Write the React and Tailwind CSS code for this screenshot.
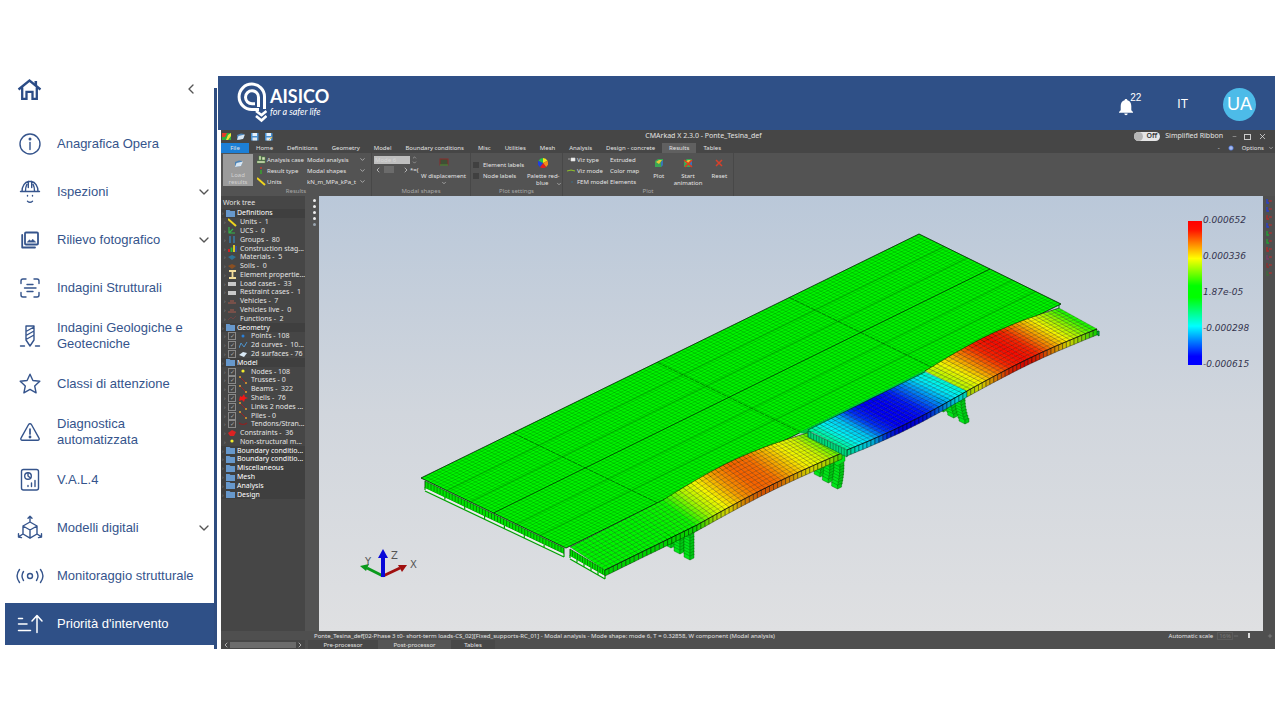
import { Fragment } from 'react';
import { ChevronDown, ChevronLeft, ChevronRight, Minus, Plus, X } from 'lucide-react';

const Svg = ({ children, size = 30, width = 1.4 }) => (
  <svg
    width={size}
    height={size}
    viewBox="0 0 30 30"
    fill="none"
    stroke="currentColor"
    strokeWidth={width}
    strokeLinecap="round"
    strokeLinejoin="round"
    aria-hidden="true"
    className="shrink-0"
  >
    {children}
  </svg>
);

const icons = {
  info: (
    <Svg>
      <circle cx="15" cy="15" r="10" />
      <path d="M15 13.500v7" />
      <circle cx="15" cy="10" r="0.8" fill="currentColor" />
    </Svg>
  ),
  helmet: (
    <Svg>
      <path d="M5.500 14.500h19M7 14.500c0-5.500 3-9.500 6.500-10h3c3.500.5 6.500 4.500 6.500 10M10.500 14c0-2.500.3-4.500 1.300-6.500M19.500 14c0-2.500-.3-4.500-1.300-6.500M13.300 10.500v-6M16.700 10.500v-6" />
      <path d="M12.500 18.500v.6M17.500 18.500v.6M12.500 24.200c1.500 1.300 3.500 1.300 5 0" />
    </Svg>
  ),
  photos: (
    <Svg width={1.8}>
      <rect x="10" y="7.500" width="13" height="12" rx="1" />
      <path d="M7.200 10v12.500H20" />
      <path d="M12.500 17l2-2.300 1.500 1.500 1.700-2 2.800 2.800z" fill="currentColor" strokeWidth="0.600" />
    </Svg>
  ),
  scan: (
    <Svg>
      <path d="M6 10.500V8a2 2 0 0 1 2-2h3M19 6h3a2 2 0 0 1 2 2v2.500M24 19.500V22a2 2 0 0 1-2 2h-3M11 24H8a2 2 0 0 1-2-2v-2.500" />
      <path d="M12 11.500h6M9.500 15h11.500M12 18.500h6" />
    </Svg>
  ),
  drill: (
    <Svg>
      <path d="M11 5h8M11 5v14l4 6 4-6V5M11 10.500L19 6M11 14.500l8-4.500M11 18.500l8-4.500M5.500 25h4M20.500 25h4" />
    </Svg>
  ),
  star: (
    <Svg>
      <path d="M15 5.200l2.900 6.300 6.900.8-5.100 4.700 1.400 6.800-6.100-3.400-6.100 3.400 1.400-6.800-5.100-4.700 6.900-.8z" />
    </Svg>
  ),
  warning: (
    <Svg>
      <path d="M13.600 7.500L6 21.200c-.6 1 .1 2.100 1.200 2.100h15.600c1.100 0 1.800-1.100 1.200-2.100L16.400 7.500c-.6-1-2.200-1-2.800 0z" />
      <path d="M15 12v5" strokeWidth="1.700" />
      <circle cx="15" cy="20" r="0.7" fill="currentColor" />
    </Svg>
  ),
  report: (
    <Svg>
      <rect x="6.500" y="4.500" width="17" height="20.500" rx="2" />
      <circle cx="13" cy="11" r="3.300" />
      <path d="M13 7.700V11l2.500 2M13 21.500v-1M16.500 21.500v-3.500M20 21.500V15.500" />
    </Svg>
  ),
  cube: (
    <Svg>
      <path d="M15 9l7 4v8l-7 4.200L8 21v-8zM8 13l7 4 7-4M15 17v8M15 9V3.500M13 5.200l2-2 2 2M8 21l-4.500 2.800M3.500 20.800v3.200l3 .6M22 21l4.500 2.800M26.500 20.800v3.200l-3 .6" />
    </Svg>
  ),
  signal: (
    <Svg>
      <circle cx="15" cy="15" r="2.500" />
      <path d="M8.500 10.500c-1.800 2.700-1.800 6.300 0 9M21.500 10.500c1.800 2.700 1.800 6.300 0 9M4.500 8.500c-3 4-3 9 0 13M25.500 8.500c3 4 3 9 0 13" />
    </Svg>
  ),
  priority: (
    <Svg width={1.5}>
      <path d="M3.500 9.500h4M3.500 15h8.500M3.500 21.500h12M22 23.500V7M17 12l5-5.500 5 5.500" />
    </Svg>
  ),
};

const menu = [
  { label: 'Anagrafica Opera', icon: 'info' },
  { label: 'Ispezioni', icon: 'helmet', open: true },
  { label: 'Rilievo fotografico', icon: 'photos', open: true },
  { label: 'Indagini Strutturali', icon: 'scan' },
  { label: 'Indagini Geologiche e Geotecniche', icon: 'drill' },
  { label: 'Classi di attenzione', icon: 'star' },
  { label: 'Diagnostica automatizzata', icon: 'warning' },
  { label: 'V.A.L.4', icon: 'report' },
  { label: 'Modelli digitali', icon: 'cube', open: true },
  { label: 'Monitoraggio strutturale', icon: 'signal' },
  { label: "Priorità d'intervento", icon: 'priority', active: true },
];

const Sidebar = () => (
  <aside className="flex w-[212px] shrink-0">
    <nav className="min-w-0 flex-1">
      <div className="mb-[18px] flex h-[26px] items-center justify-between pr-[15px] pl-3">
        <a href="#home" aria-label="Home" className="text-[#2b4c86]">
          <svg width="25" height="25" viewBox="0 0 25 25" fill="none" stroke="currentColor" strokeWidth="2.300" aria-hidden="true">
            <path d="M1.500 12.500L12.500 3.500l11 9M5.200 10.500v11.300h4.300v-7h6v7h4.300V10.500" />
            <path d="M18.800 4v4.500" strokeWidth="2.600" />
          </svg>
        </a>
        <button type="button" aria-label="Collapse menu" className="text-[#555]">
          <ChevronLeft size={16} strokeWidth={2} />
        </button>
      </div>
      <ul>
        {menu.map(({ label, icon, open, active }) => (
          <li key={label} className="flex h-12 items-center">
            <a
              href="#section"
              className={`flex h-[42px] w-full items-center pl-[10px] text-[13px] leading-4 ${
                active ? 'bg-[#2f5087] text-white' : 'text-[#35548c]'
              }`}
            >
              {icons[icon]}
              <span className={`ml-3 flex-1 ${open ? '' : 'mr-3'}`}>{label}</span>
              {open && <ChevronDown size={16} className="mr-[2px] text-[#555]" />}
            </a>
          </li>
        ))}
      </ul>
    </nav>
    <div className="mt-3 w-[3px] bg-[#2f4d80]" />
  </aside>
);

const Header = () => (
  <header className="flex h-[54px] items-center justify-between bg-[#2f5087] pr-[19px] pl-[19px] text-white">
    <div className="flex items-center">
      <svg width="30" height="42" viewBox="0 0 30 42" fill="none" stroke="white" aria-hidden="true">
        <path d="M27.500 27V15A12.700 12.700 0 1 0 15 27.500h7" strokeWidth="3" />
        <path d="M21.500 25V15.500A6.500 6.500 0 1 0 15 21.800h3" strokeWidth="3" />
        <path d="M19 29l5.500 4 5-4M19 34l5.500 4.500 5-4.500" strokeWidth="2.600" />
      </svg>
      <div className="ml-[3px]">
        <div className="font-['Lato'] text-[18px] leading-[18px] font-bold">AISICO</div>
        <div className="font-['Lato'] text-[9px] leading-[14px] italic">for a safer life</div>
      </div>
    </div>
    <div className="flex items-center pt-[2px]">
      <button type="button" aria-label="Notifications" className="flex items-start">
        <svg width="16" height="18" viewBox="0 0 16 18" fill="white" aria-hidden="true" className="mt-[5px]">
          <path d="M8 1c.9 0 1.400.6 1.400 1.300C12 3 13.300 5.200 13.300 8v4.200l1.700 1.700v.8H1v-.8l1.700-1.700V8C2.700 5.200 4 3 6.600 2.300 6.600 1.600 7.100 1 8 1zM6.300 15.500h3.400a1.700 1.700 0 0 1-3.400 0z" />
        </svg>
        <span className="-ml-1 text-[10px] leading-[9px]">22</span>
      </button>
      <button type="button" className="ml-9 text-[12px]">IT</button>
      <button type="button" className="ml-[35px] size-[33px] rounded-full bg-[#4dbbe8] text-[18px]">UA</button>
    </div>
  </header>
);

const FileIcon = ({ kind }) => (
  <svg width="9" height="9" viewBox="0 0 9 9" aria-hidden="true">
    {kind === 'app' && (
      <>
        <path d="M0 1h9v7H0z" fill="#2fae3a" />
        <path d="M0 1h5L3 5H0z" fill="#e33b2a" />
        <path d="M4 8l2-5 3-2v3L6 8z" fill="#f2e23a" />
      </>
    )}
    {kind === 'open' && (
      <>
        <path d="M1 3l4-1.500L8 2v4L3 8 1 7z" fill="#4c83b5" />
        <path d="M2.500 4L9 2.500 7 7 1 8z" fill="#d8e6f2" />
      </>
    )}
    {(kind === 'save' || kind === 'saveAs') && (
      <>
        <rect x="1" y="1" width="7.500" height="7.500" fill="#4a90d0" />
        <rect x="2.500" y="1" width="4.500" height="3" fill="#e8f1fa" />
        <rect x="2.500" y="5.500" width="4.500" height="3" fill="#dfe8f0" />
        {kind === 'saveAs' && <path d="M5 8l3-3" stroke="#f0c040" />}
      </>
    )}
  </svg>
);

const TitleBar = () => (
  <div className="flex h-[13px] items-center text-[7px]">
    <div className="flex flex-1 gap-[5px] pl-px">
      {['app', 'open', 'save', 'saveAs'].map((kind) => (
        <button key={kind} type="button" aria-label={kind}>
          <FileIcon kind={kind} />
        </button>
      ))}
    </div>
    <div>CMArkad X 2.3.0 - Ponte_Tesina_def</div>
    <div className="flex flex-1 items-center justify-end pl-[90px]">
      <button type="button" className="flex h-[9px] w-[26px] items-center justify-between rounded-full bg-[#e6e6e6] pr-[3px] font-semibold text-[#333]">
        <span className="size-[9px] rounded-full bg-[#b5b5b5]" />
        Off
      </button>
      <span className="mr-[9px] ml-[5px]">Simplified Ribbon</span>
      <div className="flex items-center gap-[7px] pr-2">
        <button type="button" aria-label="Minimize"><Minus size={5} /></button>
        <button type="button" aria-label="Restore" className="h-[6px] w-[7px] border border-[#ccc]" />
        <button type="button" aria-label="Close"><X size={9} /></button>
      </div>
    </div>
  </div>
);

const tabs = ['Home', 'Definitions', 'Geometry', 'Model', 'Boundary conditions', 'Misc', 'Utilities', 'Mesh', 'Analysis', 'Design - concrete', 'Results', 'Tables'];

const RibbonTabs = () => (
  <div className="flex h-[10px] text-[6px] leading-[10px]">
    <button type="button" className="w-7 bg-[#1c7fd6]">File</button>
    {tabs.map((tab) => (
      <button key={tab} type="button" className={`px-[7px] ${tab === 'Results' ? 'bg-[#606060]' : ''}`}>
        {tab}
      </button>
    ))}
    <div className="ml-auto flex items-center gap-1 pr-px">
      <span>-</span>
      <svg width="6" height="6" viewBox="0 0 6 6" aria-hidden="true" className="ml-1">
        <circle cx="3" cy="3" r="2.500" fill="#5b7fd8" />
        <path d="M3 1v4M1 3h4" stroke="#dfe6ff" strokeWidth="0.700" />
      </svg>
      <button type="button" className="ml-1 flex items-center gap-1">
        Options <ChevronDown size={6} />
      </button>
    </div>
  </div>
);

const Group = ({ label, className, children }) => (
  <section className={`flex flex-col border-r border-[#484848] ${className}`}>
    <div className="flex flex-1">{children}</div>
    <div className="h-[9px] text-center leading-[8px] text-[#a9a9a9]">{label}</div>
  </section>
);

const resultRows = [
  {
    label: 'Analysis case',
    value: 'Modal analysis',
    icon: <path d="M0 8h8V6H0zM2 5V1h2v4zM5 5V2h3v3z" fill="#d9d9c0" stroke="#4a9a3a" strokeWidth="0.500" />,
  },
  {
    label: 'Result type',
    value: 'Modal shapes',
    icon: (
      <>
        <path d="M4 1v2" stroke="#c04030" strokeWidth="1.500" />
        <path d="M4 4v4" stroke="#37a32f" strokeWidth="1.500" />
      </>
    ),
  },
  { label: 'Units', value: 'kN_m_MPa_kPa_t', icon: <path d="M0 1l8 7" stroke="#f0d51e" strokeWidth="2" /> },
];

const vizRows = [
  { label: 'Viz type', value: 'Extruded', icon: <path d="M1 4h2M4 3h4v3H4z" stroke="#ddd" fill="#eee" strokeWidth="0.600" /> },
  { label: 'Viz mode', value: 'Color map', icon: <path d="M0 5l4-1 4 1" stroke="#8fbf2c" fill="none" strokeWidth="1.200" /> },
  { label: 'FEM model', value: 'Elements', icon: <path d="M4 4h2v2H4z" fill="#47606e" /> },
];

const LabelledSelect = ({ label, value, icon, labelClass, selectClass, chevron }) => (
  <label className="flex h-[11px] items-center">
    <svg width="9" height="9" viewBox="0 0 9 9" className="shrink-0" aria-hidden="true">{icon}</svg>
    <span className={`ml-px whitespace-nowrap ${labelClass}`}>{label}</span>
    <select className={`appearance-none bg-transparent ${selectClass}`}>
      <option>{value}</option>
    </select>
    {chevron && <ChevronDown size={7} className="shrink-0" />}
  </label>
);

const PlotGlyph = ({ crossed }) => (
  <svg width="10" height="10" viewBox="0 0 10 10" aria-hidden="true" className="mb-[5px]">
    <path d="M1 3l3-2h5v6L7 9H1z" fill="#3aa655" />
    <path d="M2 4l3-2h3L5 6z" fill="#e8c53a" />
    <path d="M7 4l2-2v5L7 9z" fill="#3b72b8" />
    {crossed && <path d="M1 2l8 7M9 2L2 9" stroke="#e03a1c" strokeWidth="1.500" />}
  </svg>
);

const toolButton = 'flex flex-col items-center pt-[5px] leading-[7px]';

const Ribbon = () => (
  <div className="flex h-[43px] bg-[#535353] text-[6px] leading-[8px]">
    <Group label="Results" className="w-[151px]">
      <button type="button" className="mt-px ml-[2px] flex h-8 w-[30px] flex-col items-center bg-[#9b9b9b] pt-[5px] leading-[7px] text-[#d2d2d2]">
        <span className="mb-[4px]"><FileIcon kind="open" /></span>
        <span>Load<br />results</span>
      </button>
      <div className="ml-1 flex-1 pt-px">
        {resultRows.map((row) => (
          <LabelledSelect key={row.label} {...row} labelClass="w-10" selectClass="w-[52px]" chevron />
        ))}
      </div>
    </Group>
    <Group label="Modal shapes" className="w-[99px]">
      <div className="pt-[2px] pl-[2px]">
        <div className="flex items-center gap-[2px]">
          <input aria-label="Mode" defaultValue="Mode 6" className="h-2 w-9 bg-[#bfbfbf] pl-px text-[#d5d5d5]" />
          <span className="flex flex-col">
            <ChevronDown size={5} className="rotate-180" />
            <ChevronDown size={5} />
          </span>
        </div>
        <div className="flex h-[9px] items-center">
          <ChevronLeft size={8} />
          <span className="mr-2 ml-[2px] h-[7px] w-[10px] bg-[#6b6b6b]" />
          <ChevronRight size={8} />
          <span>*=(</span>
        </div>
      </div>
      <button type="button" className={`mr-1 ml-auto ${toolButton}`}>
        <svg width="10" height="9" viewBox="0 0 10 9" aria-hidden="true" className="mb-[6px]">
          <rect x="1" y="1" width="8" height="6" fill="#3f4f35" stroke="#8a2b2b" />
          <path d="M1 7h8" stroke="#2f9a3a" />
        </svg>
        <span className="whitespace-nowrap">W displacement</span>
        <ChevronDown size={6} />
      </button>
    </Group>
    <Group label="Plot settings" className="w-[92px]">
      <div className="pt-[6px] pl-[2px]">
        {['Element labels', 'Node labels'].map((label) => (
          <label key={label} className="flex h-[11px] items-center gap-1 whitespace-nowrap">
            <input type="checkbox" className="size-[6px] appearance-none bg-[#404040]" />
            {label}
          </label>
        ))}
      </div>
      <button type="button" className={`ml-auto ${toolButton}`}>
        <svg width="10" height="10" viewBox="0 0 10 10" aria-hidden="true" className="mb-[5px]">
          <path d="M5 5V0a5 5 0 0 1 4.500 2.800z" fill="#f5e51b" />
          <path d="M5 5l4.500-2.200A5 5 0 0 1 8 9z" fill="#f58a1b" />
          <path d="M5 5l3 4a5 5 0 0 1-6 0z" fill="#e02020" />
          <path d="M5 5L2 9A5 5 0 0 1 .5 2.800z" fill="#2040e0" />
          <path d="M5 5L.5 2.800A5 5 0 0 1 5 0z" fill="#22c04a" />
        </svg>
        <span className="flex">Palette red-</span>
        <span className="flex items-center gap-2 pl-3">blue <ChevronDown size={6} /></span>
      </button>
    </Group>
    <Group label="Plot" className="w-[171px]">
      <div className="pt-px pl-1">
        {vizRows.map((row) => (
          <LabelledSelect key={row.label} {...row} labelClass="w-[33px]" selectClass="w-9" />
        ))}
      </div>
      <button type="button" className={`ml-px w-6 ${toolButton}`}><PlotGlyph />Plot</button>
      <button type="button" className={`w-9 ${toolButton}`}><PlotGlyph crossed />Start animation</button>
      <button type="button" className={`w-7 ${toolButton}`}>
        <svg width="10" height="10" viewBox="0 0 10 10" aria-hidden="true" className="mb-[5px]">
          <path d="M2 2l6 6M8 2L2 8" stroke="#d8402a" strokeWidth="1.500" />
        </svg>
        Reset
      </button>
    </Group>
  </div>
);

const treeGlyphs = {
  ruler: <path d="M0 1l8 7" stroke="#f0d51e" strokeWidth="2" />,
  axes: <path d="M1 1v6h6M1 7l4-4" stroke="#35b34a" strokeWidth="1.200" fill="none" />,
  groups: <path d="M2 1v7M6 1v7" stroke="#3a7ca8" strokeWidth="1.500" />,
  bars: (
    <>
      <path d="M1 5v3" stroke="#e02020" strokeWidth="1.800" />
      <path d="M3.500 3.500V8" stroke="#28b838" strokeWidth="1.800" />
      <path d="M6 1v7" stroke="#f0d51e" strokeWidth="1.800" />
      <path d="M8 2v6" stroke="#2a50e0" />
    </>
  ),
  material: <path d="M0 4l4-2 4 2-4 3z" fill="#2f7396" />,
  soil: <path d="M0 4l4-2 4 2-4 3z" fill="#8a4f22" />,
  beam: <path d="M1 1h7M1 8h7M4.500 1v7" stroke="#f2dc9a" strokeWidth="1.800" />,
  load: <path d="M0 3h8v4H0z" fill="#c9c9c9" />,
  vehicle: <path d="M0 6h8M2 4h4" stroke="#a85a4c" strokeWidth="1.200" />,
  fn: <path d="M0 6l3-3 2 2 3-3" stroke="#6b4444" fill="none" />,
  point: <circle cx="4" cy="4" r="1.500" fill="#2a7fd8" />,
  curve: <path d="M0 7l2-5 3 4 3-5" stroke="#4d93cc" fill="none" />,
  surface: <path d="M0 5l4-3 4 1-3 4z" fill="#d9e9f5" />,
  node: <circle cx="4" cy="4" r="1.600" fill="#f3ee2d" />,
  truss: (
    <>
      <path d="M1 1l6 6" stroke="#9c2525" />
      <path d="M0 1h2M6 7h2" stroke="#e0a030" strokeWidth="1.500" />
    </>
  ),
  shell: <path d="M1 3l2 1 2-3 1 3 3 1-3 1-1 3-2-2-3 1z" fill="#f01818" />,
  tendon: <path d="M0 3q4 3 8 0" stroke="#8c2323" fill="none" strokeWidth="1.200" />,
  constraint: <path d="M0 4l4-3 4 2-2 4H2z" fill="#dd2222" />,
};

// level 0 is a folder, level 1 a plain item, level 2 an item with a tick box
const tree = [
  [0, 'Definitions'],
  [1, 'Units -  1', 'ruler'],
  [1, 'UCS -  0', 'axes'],
  [1, 'Groups -  80', 'groups'],
  [1, 'Construction stag...', 'bars'],
  [1, 'Materials -  5', 'material'],
  [1, 'Soils -  0', 'soil'],
  [1, 'Element propertie...', 'beam'],
  [1, 'Load cases -  33', 'load'],
  [1, 'Restraint cases -  1', 'load'],
  [1, 'Vehicles -  7', 'vehicle'],
  [1, 'Vehicles live -  0', 'vehicle'],
  [1, 'Functions -  2', 'fn'],
  [0, 'Geometry'],
  [2, 'Points - 108', 'point'],
  [2, '2d curves -  10...', 'curve'],
  [2, '2d surfaces - 76', 'surface'],
  [0, 'Model'],
  [2, 'Nodes - 108', 'node'],
  [2, 'Trusses - 0', 'truss'],
  [2, 'Beams -  322', 'truss'],
  [2, 'Shells -  76', 'shell'],
  [2, 'Links 2 nodes ...', 'truss'],
  [2, 'Piles - 0', 'truss'],
  [2, 'Tendons/Stran...', 'tendon'],
  [1, 'Constraints -  36', 'constraint'],
  [1, 'Non-structural m...', 'node'],
  [0, 'Boundary conditio...'],
  [0, 'Boundary conditio...'],
  [0, 'Miscellaneous'],
  [0, 'Mesh'],
  [0, 'Analysis'],
  [0, 'Design'],
];

const TreeRow = ({ level, label, glyph }) => {
  const Row = level === 2 ? 'label' : 'div';
  return (
    <Row className={`flex items-center whitespace-pre ${level === 0 ? 'bg-[#3f3f3f] pl-px text-white' : 'pl-[3px]'}`}>
      <span className="w-1 text-[5px] text-[#999]">›</span>
      {level === 2 && (
        <input
          type="checkbox"
          defaultChecked
          className="mr-[3px] grid size-2 shrink-0 appearance-none place-content-center border border-[#8a8a8a] before:text-[6px] before:leading-none before:text-[#aaa] before:content-['✓']"
        />
      )}
      {level === 0 ? (
        <svg width="9" height="7" viewBox="0 0 9 7" aria-hidden="true" className="mr-[2px] shrink-0">
          <path d="M0 0h3.500l1 1H9v6H0z" fill="#6798cc" />
        </svg>
      ) : (
        <svg width="9" height="9" viewBox="0 0 9 9" aria-hidden="true" className="mr-[3px] shrink-0">
          {treeGlyphs[glyph]}
        </svg>
      )}
      {label}
    </Row>
  );
};

const WorkTree = () => (
  <div className="flex w-[84px] shrink-0 flex-col overflow-hidden bg-[#464646] text-[7px] leading-[8px]">
    <h2 className="h-[13px] pl-[2px] leading-[13px]">Work tree</h2>
    <div className="grid h-[290px] auto-rows-fr">
      {tree.map(([level, label, glyph], i) => (
        <TreeRow key={i} level={level} label={label} glyph={glyph} />
      ))}
    </div>
  </div>
);

const lerp = (a, b, t) => a + (b - a) * t;
const mix = (p, q, t) => [lerp(p[0], q[0], t), lerp(p[1], q[1], t)];
const pts = (...list) => list.map((p) => p.map((n) => n.toFixed(1)).join(',')).join(' ');
const line = (p, q) => `M${pts(p)}L${pts(q)}`;
const steps = (n) => Array.from({ length: n + 1 }, (_, i) => i / n);

// -1 blue, -0.5 cyan, 0 green, 0.5 yellow, 1 red
const ramp = (v, shade = 1) => {
  const c = Math.max(-1, Math.min(1, v));
  let rgb;
  if (c < -0.5) rgb = [0, (c + 1) * 2, 1];
  else if (c < 0) rgb = [0, 1, -c * 2];
  else if (c < 0.5) rgb = [c * 2, 1, 0];
  else rgb = [1, (1 - c) * 2, 0];
  return `rgb(${rgb.map((n) => Math.round(n * 245 * shade)).join(',')})`;
};

const sample = (stops, t) => {
  const pos = t * (stops.length - 1);
  const i = Math.min(Math.floor(pos), stops.length - 2);
  return lerp(stops[i], stops[i + 1], pos - i);
};

const deck = { a: [421, 478], b: [919, 234], c: [1061, 304], d: [566, 548] };

const spans = [
  { top: [[570, 547], [663, 500]], low: [[605, 570], [697, 525]], rise: [0, 0], n: 22, stops: [0, 0, 0, 0.03] },
  {
    top: [[663, 500], [807, 433]],
    low: [[697, 525], [842, 453]],
    rise: [7, 3],
    n: 36,
    stops: [0.05, 0.35, 0.52, 0.7, 0.8, 0.78, 0.64, 0.5, 0.42, 0.15],
  },
  {
    top: [[808, 430], [925, 372]],
    low: [[847, 450], [967, 391]],
    rise: [0, -3],
    n: 30,
    stops: [-0.3, -0.5, -0.6, -0.9, -1, -1, -0.95, -0.75, -0.55, -0.42],
  },
  {
    top: [[925, 371], [1059, 308]],
    low: [[967, 391], [1097, 329]],
    rise: [6, 3],
    n: 34,
    stops: [0.35, 0.5, 0.72, 0.92, 0.98, 0.92, 0.7, 0.5, 0.3, 0.03],
  },
];

const at = ([p, q], rise, t) => {
  const [x, y] = mix(p, q, t);
  return [x, y - rise * Math.sin(Math.PI * t)];
};

const Span = ({ top, low, rise, n, stops }) => {
  const strips = Array.from({ length: n }, (_, i) => [i / n, (i + 1) / n]);
  const rows = steps(10);
  const down = ([x, y]) => [x, y + 6];
  return (
    <g>
      {strips.map(([s, e]) => {
        const v = sample(stops, (s + e) / 2);
        const a = at(low, rise[1], s);
        const b = at(low, rise[1], e);
        return (
          <Fragment key={s}>
            <polygon points={pts(at(top, rise[0], s), at(top, rise[0], e), b, a)} fill={ramp(v)} stroke="#000" strokeOpacity="0.400" strokeWidth="0.500" />
            <polygon points={pts(a, b, down(b), down(a))} fill={ramp(v, 0.85)} stroke="#000" strokeOpacity="0.500" strokeWidth="0.700" />
          </Fragment>
        );
      })}
      {rows.map((r) => (
        <polyline
          key={r}
          points={pts(...strips.map(([s]) => mix(at(top, rise[0], s), at(low, rise[1], s), r)), mix(top[1], low[1], r))}
          fill="none"
          stroke="#000"
          strokeOpacity={r === 0 || r === 1 ? 0.7 : 0.35}
          strokeWidth={r === 1 ? 0.9 : 0.5}
        />
      ))}
    </g>
  );
};

// columns hang below the deck edge, the nearest one on the right
const Pier = ({ x, y, lean = 0 }) => (
  <g fill="#00e61a" stroke="#006400" strokeWidth="0.400">
    {[[-28, 12], [-19, 18], [-9, 24]].map(([dx, h]) => (
      <g key={dx}>
        {steps(Math.round(h / 3)).slice(0, -1).map((t) => {
          const yy = y - 3 + t * h;
          const xx = x + dx + lean * (h / 23) * t * t;
          return (
            <Fragment key={t}>
              <path d={`M${xx} ${yy}l6 3v4l-6-3z`} />
              <path d={`M${xx + 6} ${yy + 3}l4-2v4l-4 2z`} fill="#00c814" />
            </Fragment>
          );
        })}
      </g>
    ))}
    <path d={`M${x - 12} ${y - 4}l14-6v7l-8 5z`} />
  </g>
);

const Bridge = () => {
  const { a, b, c, d } = deck;
  const mesh = [
    ...steps(46).map((t) => line(mix(a, d, t), mix(b, c, t))),
    ...steps(130).map((t) => line(mix(a, b, t), mix(d, c, t))),
  ].join('');
  const drop = ([x, y], h) => [x, y + h];
  const front = [[425, 481], [564, 548]];
  const nose = [[570, 549], [605, 570]];
  return (
    <g>
      <Pier x={693} y={535} />
      <Pier x={843} y={464} lean={-3} />
      <Pier x={964} y={399} lean={5} />
      <path d="M1090 333l9-2v5l-4-3zM1059 304v6" fill="#00b840" stroke="#007020" />
      {[front, nose].map(([p, q], i) => (
        <g key={i}>
          <polygon points={pts(p, q, drop(q, 6), drop(p, 7))} fill="#00e400" stroke="#004800" strokeWidth="0.500" />
          <path
            d={steps(i ? 14 : 46).map((t) => line(mix(p, q, t), drop(mix(p, q, t), 6))).join('')}
            stroke="#003c00"
            strokeWidth="0.500"
          />
          <path d={line(drop(p, 8), drop(q, 7))} stroke="#eef2ee" strokeWidth="1.500" />
          <path
            d={line(drop(p, 10), drop(q, 9)) + steps(i ? 5 : 7).map((t) => line(drop(mix(p, q, t), 6), drop(mix(p, q, t), 9))).join('')}
            stroke="#00a400"
            strokeWidth="1.200"
          />
        </g>
      ))}
      <polygon points={pts(a, b, c, d)} fill="#00f400" stroke="#003000" strokeWidth="0.800" />
      <path d={mesh} stroke="#004000" strokeOpacity="0.450" strokeWidth="0.500" />
      {[[0.18, 0.35], [0.34, 0.35], [0.5, 0.9], [0.66, 0.3], [0.82, 0.35]].map(([t, o]) => (
        <path key={t} d={line(mix(a, d, t), mix(b, c, t))} stroke="#003c00" strokeOpacity={o} strokeWidth="0.900" />
      ))}
      {[0.185, 0.474, 0.74].map((t) => (
        <path key={t} d={line(mix(a, b, t), mix(d, c, t))} stroke="#003000" strokeOpacity="0.700" strokeDasharray="5 1" strokeWidth="0.700" />
      ))}
      <polygon points="798,433 925,370 925,376 808,434" fill="#00c040" />
      {spans.map((span, i) => <Span key={i} {...span} />)}
      <polygon points="808,431 847,450 847,457 808,437" fill="#00d87c" stroke="#00502c" strokeWidth="0.500" />
      <path d={steps(14).map((t) => line(mix([808, 431], [847, 450], t), mix([808, 437], [847, 457], t))).join('')} stroke="#00502c" strokeWidth="0.500" />
    </g>
  );
};

const scale = [
  [223, '0.000652'],
  [259, '0.000336'],
  [295, '1.87e-05'],
  [331, '-0.000298'],
  [367, '-0.000615'],
];

const Viewer = () => (
  <div className="min-w-0 flex-1 bg-linear-to-b from-[#bac8d9] via-[#d1d6dd] to-[#dfe0e2]">
    <svg viewBox="319 196 944 435" className="block h-auto w-full" role="img" aria-label="Modal shape of the bridge deck">
      <defs>
        <linearGradient id="ramp" x1="0" y1="0" x2="0" y2="1">
          <stop offset="0" stopColor="#f00" />
          <stop offset="0.060" stopColor="#f10" />
          <stop offset="0.260" stopColor="#ff0" />
          <stop offset="0.450" stopColor="#0f0" />
          <stop offset="0.530" stopColor="#0f0" />
          <stop offset="0.730" stopColor="#0ff" />
          <stop offset="0.940" stopColor="#00f" />
        </linearGradient>
      </defs>
      <Bridge />
      <rect x="1188" y="221" width="14" height="144" fill="url(#ramp)" />
      <g className="font-['DejaVu_Sans'] text-[9px] italic" fill="#33334d">
        {scale.map(([y, text]) => <text key={text} x="1203" y={y}>{text}</text>)}
      </g>
      <g strokeWidth="3">
        <path d="M383 576l-16-8" stroke="#0a9a1c" />
        <path d="M360 566l9-2-3 7z" fill="#0a9a1c" />
        <path d="M383 576l17-8" stroke="#a01010" />
        <path d="M407 565l-9 0 4 7z" fill="#a01010" />
        <path d="M383 577v-20" stroke="#0808d8" strokeWidth="4" />
        <path d="M383 549l5 9h-10z" fill="#0808d8" />
      </g>
      <g className="font-['DejaVu_Sans'] text-[10px]" fill="#555">
        <text x="365" y="565">Y</text>
        <text x="391" y="559">Z</text>
        <text x="410" y="568">X</text>
      </g>
    </svg>
  </div>
);

const viewColors = ['#2a3fd0', '#2a3fd0', '#b02a2a', '#2a3fd0', '#22a033', '#22a033', '#b02a2a', '#7a3a6a', '#8a3030', '#3f6a3a'];

const StatusBar = () => (
  <footer className="bg-[#4f4f4f] text-[6px]">
    <div className="flex h-[9px] items-center justify-between pr-[2px] pl-[93px] leading-[8px]">
      <span>
        Ponte_Tesina_def[02-Phase 3 t0- short-term loads-CS_02][Fixed_supports-RC_01] - Modal analysis - Mode shape: mode 6, T = 0.32858, W component (Modal analysis)
      </span>
      <span className="flex items-center">
        Automatic scale
        <span className="ml-1 border border-[#5c5c5c] px-px leading-[6px] text-[#7a7a7a]">16%</span>
        <Minus size={6} className="text-[#888]" />
        <input
          type="range"
          aria-label="Scale"
          defaultValue="25"
          className="mx-1 h-[6px] w-5 appearance-none bg-transparent [&::-webkit-slider-thumb]:h-[5px] [&::-webkit-slider-thumb]:w-[2px] [&::-webkit-slider-thumb]:appearance-none [&::-webkit-slider-thumb]:bg-[#ddd]"
        />
        <Plus size={6} className="text-[#999]" />
      </span>
    </div>
    <div className="flex h-[9px]">
      <div className="flex w-[84px] items-center justify-between bg-[#464646] px-px">
        <ChevronLeft size={8} />
        <span className="h-[6px] flex-1 bg-[#6b6b6b]" />
        <ChevronRight size={8} />
      </div>
      <div className="ml-[3px] flex leading-[8px]">
        <button type="button" className="w-[70px] bg-[#484848]">Pre-processor</button>
        <button type="button" className="w-[73px] bg-[#555]">Post-processor</button>
        <button type="button" className="w-11 bg-[#484848]">Tables</button>
      </div>
    </div>
  </footer>
);

const ModelWindow = () => (
  <div className="ml-[3px] bg-[#464646] font-['Noto_Sans',sans-serif] text-[#e4e4e4]">
    <TitleBar />
    <RibbonTabs />
    <Ribbon />
    <div className="flex">
      <WorkTree />
      <div className="flex w-[14px] shrink-0 flex-col items-center gap-[3px] bg-[#535353] pt-[3px] pl-1">
        {[0, 1, 2, 3, 4].map((i) => (
          <span key={i} className={`size-[3px] rounded-full ${i === 4 ? 'bg-[#9aa5b0]' : 'bg-[#eee]'}`} />
        ))}
      </div>
      <Viewer />
      <div className="flex w-3 shrink-0 flex-col items-center gap-[2px] bg-[#4f4f4f] pt-[2px]">
        {viewColors.map((color, i) => (
          <svg key={i} width="6" height="6" viewBox="0 0 6 6" aria-hidden="true">
            <path d="M1 1v4h2" stroke={color} fill="none" strokeWidth="1.300" />
            <path d="M3 3h3" stroke="#b83030" strokeWidth="1.200" />
          </svg>
        ))}
      </div>
    </div>
    <StatusBar />
  </div>
);

const App = () => (
  <div className="min-h-screen bg-white px-[5px] pt-[76px] font-['Liberation_Sans',sans-serif]">
    <div className="flex">
      <Sidebar />
      <main className="ml-px min-w-0 flex-1">
        <Header />
        <ModelWindow />
      </main>
    </div>
  </div>
);

export default App;
